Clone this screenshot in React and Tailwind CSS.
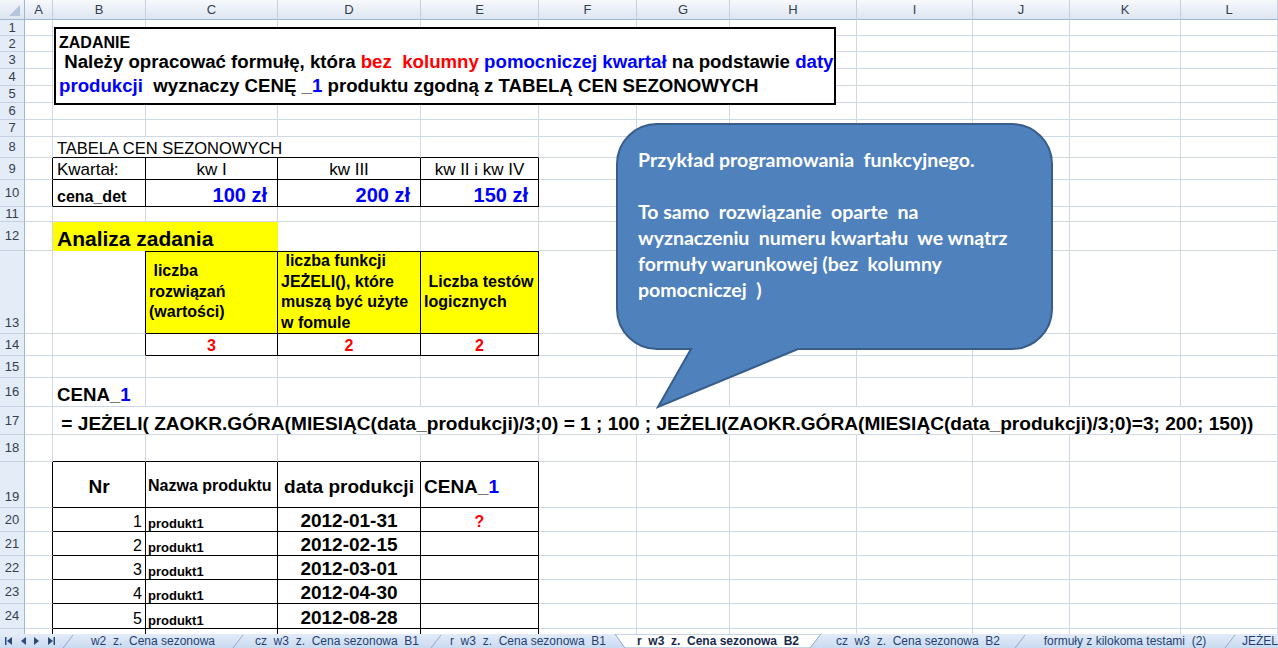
import React from 'react';

const SPAN = {
  1: 'col-span-1',
  2: 'col-span-2',
  3: 'col-span-3',
  4: 'col-span-4',
  10: 'col-span-10',
  11: 'col-span-11',
};

const LETTERS = ['A', 'B', 'C', 'D', 'E', 'F', 'G', 'H', 'I', 'J', 'K', 'L'];

// table cell: black right / bottom border
const T = 'border-r-black border-b-black';
const MID = 'items-center leading-none pt-[3px]';

function Cell({ s = 1, v = 'items-end leading-none pb-[1px]', className = '', children }) {
  return (
    <div className={`${SPAN[s]} flex min-w-0 whitespace-pre border-r border-b border-[#d0d7e5] ${v} ${className}`}>
      {children}
    </div>
  );
}

function Blank({ n }) {
  return Array.from({ length: n }, (_, i) => <Cell key={i} />);
}

function RowHead({ n, bottom }) {
  return (
    <div
      className={`flex justify-center border-r border-b border-r-[#9eb6ce] border-b-[#c5d1e2] bg-[#e4ecf7] text-[13px] text-[#333f50] ${
        bottom ? 'items-end pb-[1px]' : 'items-center'
      }`}
    >
      {n}
    </div>
  );
}

function Blue({ children }) {
  return <span className="text-[#0000ff]">{children}</span>;
}

function Red({ children }) {
  return <span className="text-[#ff0000]">{children}</span>;
}

const products = [
  ['1', '2012-01-31'],
  ['2', '2012-02-15'],
  ['3', '2012-03-01'],
  ['4', '2012-04-30'],
  ['5', '2012-08-28'],
];

function Slash() {
  return (
    <svg width="12" height="14" viewBox="0 0 12 14" className="shrink-0">
      <line x1="1" y1="14" x2="11" y2="1" stroke="#8ea9cc" strokeWidth="1" />
    </svg>
  );
}

function Tab({ label, w }) {
  return (
    <div className={`flex shrink-0 items-center justify-center whitespace-pre text-[#1f3f73] ${w}`}>
      {label}
    </div>
  );
}

function TabBar() {
  return (
    <div className="flex h-[14px] items-stretch overflow-hidden bg-linear-to-b from-[#e3ecf8] to-[#c9daf0] font-['Liberation_Sans',Arial,sans-serif] text-[12px] leading-none">
      <div className="flex w-[62px] shrink-0 items-center gap-[8px] pl-[5px]">
        <svg width="7" height="8" viewBox="0 0 7 8">
          <rect x="0" y="0" width="1.5" height="8" fill="#2c4a78" />
          <polygon points="7,0 7,8 2,4" fill="#2c4a78" />
        </svg>
        <svg width="6" height="8" viewBox="0 0 6 8">
          <polygon points="6,0 6,8 1,4" fill="#2c4a78" />
        </svg>
        <svg width="6" height="8" viewBox="0 0 6 8">
          <polygon points="0,0 0,8 5,4" fill="#2c4a78" />
        </svg>
        <svg width="7" height="8" viewBox="0 0 7 8">
          <polygon points="0,0 0,8 5,4" fill="#2c4a78" />
          <rect x="5.5" y="0" width="1.5" height="8" fill="#2c4a78" />
        </svg>
      </div>
      <Slash />
      <Tab w="w-[158px]" label="w2  z.  Cena sezonowa" />
      <Slash />
      <Tab w="w-[186px]" label="cz  w3  z.  Cena sezonowa  B1" />
      <Slash />
      <Tab w="w-[172px]" label="r  w3  z.  Cena sezonowa  B1" />
      <div className="relative flex w-[208px] shrink-0 items-center justify-center">
        <svg className="absolute inset-0" width="208" height="14" viewBox="0 0 208 14">
          <polygon points="1,0 207,0 196,14 11,14" fill="#ffffff" stroke="#8ea9cc" strokeWidth="1" />
        </svg>
        <span className="relative whitespace-pre font-bold text-[#15294b]">r  w3  z.  Cena sezonowa  B2</span>
      </div>
      <Tab w="w-[192px]" label="cz  w3  z.  Cena sezonowa  B2" />
      <Slash />
      <Tab w="w-[198px]" label="formuły z kilokoma testami  (2)" />
      <Slash />
      <div className="flex shrink-0 items-center whitespace-pre pl-[6px] text-[#1f3f73]">JEŻELI</div>
    </div>
  );
}

function Callout() {
  const r = 40;
  const d = `M ${7 + r} 6 H ${442 - r} A ${r} ${r} 0 0 1 442 ${6 + r} V ${231 - r} A ${r} ${r} 0 0 1 ${442 - r} 231 H 188 L 48 289 L 81 231 H ${7 + r} A ${r} ${r} 0 0 1 7 ${231 - r} V ${6 + r} A ${r} ${r} 0 0 1 ${7 + r} 6 Z`;
  return (
    <div className="absolute left-[610px] top-[118px] h-[300px] w-[450px]">
      <svg width="450" height="300" viewBox="0 0 450 300" className="absolute inset-0">
        <path d={d} fill="#4f81bd" stroke="#385d8a" strokeWidth="2" />
      </svg>
      <div className="absolute left-[28px] top-[29px] whitespace-pre font-['Lato','Open_Sans',sans-serif] text-[19.5px] font-bold leading-[26px] text-white">
        <div>Przykład programowania  funkcyjnego.</div>
        <div>&nbsp;</div>
        <div>To samo  rozwiązanie  oparte  na</div>
        <div>wyznaczeniu  numeru kwartału  we wnątrz</div>
        <div>formuły warunkowej (bez  kolumny</div>
        <div>pomocniczej  )</div>
      </div>
    </div>
  );
}

function TaskBox() {
  return (
    <div className="absolute left-[54px] top-[27px] h-[78px] w-[782px] border-2 border-black bg-white pl-[3px] pt-[5px] font-bold whitespace-pre text-black">
      <div className="text-[16px] leading-[18px]">ZADANIE</div>
      <div className="-mt-[2px] text-[18.67px] leading-[24px]">
        {' Należy opracować formułę, która '}
        <Red>bez  kolumny</Red> <Blue>pomocniczej kwartał</Blue>
        {' na podstawie '}
        <Blue>daty</Blue>
      </div>
      <div className="text-[18.67px] leading-[24px]">
        <Blue>produkcji</Blue>
        {'  wyznaczy CENĘ _'}
        <Blue>1</Blue>
        {' produktu zgodną z TABELĄ CEN SEZONOWYCH'}
      </div>
    </div>
  );
}

export default function App() {
  return (
    <div className="h-[648px] w-[1278px] overflow-hidden bg-white font-['Liberation_Sans',Arial,sans-serif] text-black">
      <div className="relative h-[634px] overflow-hidden">
        <div className="grid grid-cols-[25px_28px_93px_132px_143px_118px_98px_93px_127px_116px_97px_111px_97px] grid-rows-[20px_16px_16px_17px_17px_17px_17px_17px_21px_22px_27px_15px_29px_83px_22px_22px_29px_28px_27px_46px_24px_24px_24px_24px_25px_20px]">
          {/* column headers */}
          <div className="relative border-r border-b border-r-[#9eb6ce] border-b-[#9eb6ce] bg-linear-to-b from-[#f3f7fb] to-[#dce5f1]">
            <svg width="24" height="19" viewBox="0 0 24 19" className="absolute inset-0">
              <polygon points="20,5 20,16 9,16" fill="#b5c6dc" />
            </svg>
          </div>
          {LETTERS.map((l) => (
            <div
              key={l}
              className="flex items-center justify-center border-r border-b border-r-[#c5d1e2] border-b-[#9eb6ce] bg-linear-to-b from-[#f7f9fc] to-[#dde6f1] text-[13px] text-[#333f50]"
            >
              {l}
            </div>
          ))}

          {[1, 2, 3, 4, 5, 6, 7].map((n) => (
            <React.Fragment key={n}>
              <RowHead n={n} />
              <Blank n={12} />
            </React.Fragment>
          ))}

          {/* 8 */}
          <RowHead n={8} />
          <Cell />
          <Cell s={3} className="border-b-black pl-[4px] text-[16.5px]">
            TABELA CEN SEZONOWYCH
          </Cell>
          <Cell className="border-b-black" />
          <Blank n={7} />

          {/* 9 */}
          <RowHead n={9} />
          <Cell className="border-r-black" />
          <Cell className={`${T} pl-[4px] text-[17px]`}>Kwartał:</Cell>
          <Cell className={`${T} justify-center text-[17px]`}>kw I</Cell>
          <Cell className={`${T} justify-center text-[17px]`}>kw III</Cell>
          <Cell className={`${T} justify-center text-[17px]`}>kw II i kw IV</Cell>
          <Blank n={7} />

          {/* 10 */}
          <RowHead n={10} />
          <Cell className="border-r-black" />
          <Cell className={`${T} pl-[4px] text-[16px] font-bold`}>cena_det</Cell>
          <Cell className={`${T} justify-end pr-[10px] text-[20px] font-bold text-[#0000ff]`}>100 zł</Cell>
          <Cell className={`${T} justify-end pr-[10px] text-[20px] font-bold text-[#0000ff]`}>200 zł</Cell>
          <Cell className={`${T} justify-end pr-[10px] text-[20px] font-bold text-[#0000ff]`}>150 zł</Cell>
          <Blank n={7} />

          {/* 11 */}
          <RowHead n={11} />
          <Blank n={12} />

          {/* 12 */}
          <RowHead n={12} />
          <Cell />
          <Cell s={2} className="border-r-[#ffff00] border-b-[#ffff00] bg-[#ffff00] pl-[4px] text-[21px] font-bold">
            Analiza zadania
          </Cell>
          <Cell className="border-b-white" />
          <Cell className="border-b-white" />
          <Blank n={7} />

          {/* 13 */}
          <RowHead n={13} bottom />
          <Cell />
          <Cell className="border-r-black" />
          <Cell
            v="items-center leading-[20.5px]"
            className={`${T} bg-[#ffff00] pl-[3px] text-[16px] font-bold shadow-[inset_0_1px_0_#000]`}
          >
            <div>
              {' liczba'}
              <br />
              rozwiązań
              <br />
              (wartości)
            </div>
          </Cell>
          <Cell
            v="items-center leading-[20.5px]"
            className={`${T} bg-[#ffff00] pl-[3px] text-[16px] font-bold shadow-[inset_0_1px_0_#000]`}
          >
            <div>
              {' liczba funkcji'}
              <br />
              JEŻELI(), które
              <br />
              muszą być użyte
              <br />
              w fomule
            </div>
          </Cell>
          <Cell
            v="items-center leading-[20.5px]"
            className={`${T} bg-[#ffff00] pl-[3px] text-[16px] font-bold shadow-[inset_0_1px_0_#000]`}
          >
            <div>
              {' Liczba testów'}
              <br />
              logicznych
            </div>
          </Cell>
          <Blank n={7} />

          {/* 14 */}
          <RowHead n={14} />
          <Cell />
          <Cell className="border-r-black" />
          <Cell className={`${T} justify-center text-[16px] font-bold text-[#ff0000]`}>3</Cell>
          <Cell className={`${T} justify-center text-[16px] font-bold text-[#ff0000]`}>2</Cell>
          <Cell className={`${T} justify-center text-[16px] font-bold text-[#ff0000]`}>2</Cell>
          <Blank n={7} />

          {/* 15 */}
          <RowHead n={15} />
          <Blank n={12} />

          {/* 16 */}
          <RowHead n={16} />
          <Cell />
          <Cell className="pl-[4px] text-[18.67px] font-bold">
            CENA_<Blue>1</Blue>
          </Cell>
          <Blank n={10} />

          {/* 17 */}
          <RowHead n={17} />
          <Cell />
          <Cell s={11} className="pl-[3px] text-[19.1px] font-bold">
            {' = JEŻELI( ZAOKR.GÓRA(MIESIĄC(data_produkcji)/3;0) = 1 ; 100 ; JEŻELI(ZAOKR.GÓRA(MIESIĄC(data_produkcji)/3;0)=3; 200; 150))'}
          </Cell>

          {/* 18 */}
          <RowHead n={18} />
          <Cell />
          <Cell className="border-b-black" />
          <Cell className="border-b-black" />
          <Cell className="border-b-black" />
          <Cell className="border-b-black" />
          <Blank n={7} />

          {/* 19 */}
          <RowHead n={19} bottom />
          <Cell className="border-r-black" />
          <Cell v={MID} className={`${T} justify-center text-[19px] font-bold`}>Nr</Cell>
          <Cell v={MID} className={`${T} pl-[2px] text-[16px] font-bold`}>Nazwa produktu</Cell>
          <Cell v={MID} className={`${T} justify-center text-[19px] font-bold`}>data produkcji</Cell>
          <Cell v={MID} className={`${T} pl-[3px] text-[19px] font-bold`}>
            CENA_<Blue>1</Blue>
          </Cell>
          <Blank n={7} />

          {/* 20 - 24 */}
          {products.map(([nr, date], i) => (
            <React.Fragment key={nr}>
              <RowHead n={20 + i} />
              <Cell className="border-r-black" />
              <Cell className={`${T} justify-end pr-[3px] text-[16px]`}>{nr}</Cell>
              <Cell className={`${T} pl-[2px] text-[13px] font-bold`}>produkt1</Cell>
              <Cell className={`${T} justify-center text-[19px] font-bold`}>{date}</Cell>
              <Cell className={`${T} justify-center text-[16px] font-bold text-[#ff0000]`}>{i === 0 ? '?' : ''}</Cell>
              <Blank n={7} />
            </React.Fragment>
          ))}

          {/* 25 (cut by the sheet tabs) */}
          <RowHead />
          <Cell className="border-r-black" />
          <Cell className={T} />
          <Cell className={T} />
          <Cell className={T} />
          <Cell className={T} />
          <Blank n={7} />
        </div>

        <TaskBox />
        <Callout />
      </div>
      <TabBar />
    </div>
  );
}
